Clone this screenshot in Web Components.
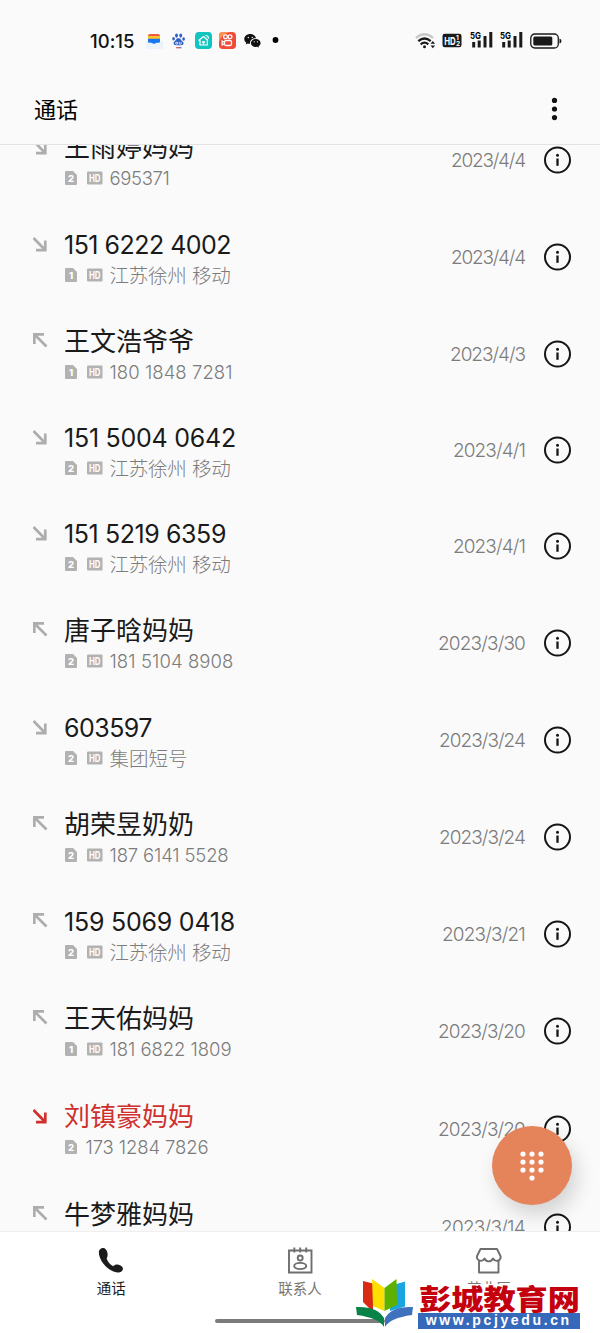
<!DOCTYPE html>
<html lang="zh-CN">
<head>
<meta charset="utf-8">
<title>通话</title>
<style>
    html, body { margin: 0; height: 100%; }
    body {
        font-family: Inter, "Noto Sans CJK SC", sans-serif;
        background: #fafafa;
        color: #1a1a1a;
        overflow: hidden;
    }
</style>
</head>
<body>
<phone-screen>
    <status-bar slot="status" time="10:15"></status-bar>
    <app-header slot="header">通话</app-header>
    <call-row dir="in" sim="2" hd fit="130" subfit="60" date="2023/4/4" datefit="74" style="height:97px">王雨婷妈妈<span slot="sub">695371</span></call-row>
    <call-row dir="in" sim="1" hd number fit="167" subfit="121" date="2023/4/4" datefit="74" style="height:97px">151 6222 4002<span slot="sub">江苏徐州 移动</span></call-row>
    <call-row dir="out" sim="1" hd fit="130" subfit="123" date="2023/4/3" datefit="75" style="height:96px">王文浩爷爷<span slot="sub">180 1848 7281</span></call-row>
    <call-row dir="in" sim="2" hd number fit="172" subfit="121" date="2023/4/1" datefit="72" style="height:96px">151 5004 0642<span slot="sub">江苏徐州 移动</span></call-row>
    <call-row dir="in" sim="2" hd number fit="162" subfit="121" date="2023/4/1" datefit="72" style="height:97px">151 5219 6359<span slot="sub">江苏徐州 移动</span></call-row>
    <call-row dir="out" sim="2" hd fit="130" subfit="124" date="2023/3/30" datefit="87" style="height:97px">唐子晗妈妈<span slot="sub">181 5104 8908</span></call-row>
    <call-row dir="in" sim="2" hd number fit="88" subfit="78" date="2023/3/24" datefit="86" style="height:97px">603597<span slot="sub">集团短号</span></call-row>
    <call-row dir="out" sim="2" hd fit="130" subfit="119" date="2023/3/24" datefit="86" style="height:97px">胡荣昱奶奶<span slot="sub">187 6141 5528</span></call-row>
    <call-row dir="out" sim="2" hd number fit="171" subfit="121" date="2023/3/21" datefit="83" style="height:97px">159 5069 0418<span slot="sub">江苏徐州 移动</span></call-row>
    <call-row dir="out" sim="1" hd fit="130" subfit="122" date="2023/3/20" datefit="87" style="height:98px">王天佑妈妈<span slot="sub">181 6822 1809</span></call-row>
    <call-row dir="in" missed sim="2" fit="130" subfit="123" date="2023/3/20" datefit="87" style="height:98px">刘镇豪妈妈<span slot="sub">173 1284 7826</span></call-row>
    <call-row dir="out" sim="2" hd fit="130" date="2023/3/14" datefit="84" style="height:97px">牛梦雅妈妈<span slot="sub"></span></call-row>
    <dial-button slot="fab"></dial-button>
    <tab-bar slot="tabs">
        <tab-item icon="phone" active>通话</tab-item>
        <tab-item icon="contacts">联系人</tab-item>
        <tab-item icon="store">营业厅</tab-item>
    </tab-bar>
    <site-mark slot="mark" url="www.pcjyedu.cn">彭城教育网</site-mark>
</phone-screen>

<script>
const icons = {
    phone: '<path d="M6.600 1.300C4.200 0 .8 1.900.8 5c0 8.700 9.200 19.600 19.200 20.500 3.700.3 5.900-3.100 4.500-5.200-2.300-3.100-7-3.700-9.300-1-3.200-1.700-5.500-4.800-6.600-7.800 1.900-2.600 1.200-8.100-2-10.200z" fill="#1c1c1c"/>',
    contacts: '<g fill="none" stroke="#6e6e6e" stroke-width="1.900"><path d="M2 3.500h22.500v22H2z"/><path d="M7.300.5v5M13.200.5v5M19.200.5v5"/><circle cx="13.200" cy="11" r="2.500"/><ellipse cx="13.200" cy="19" rx="6" ry="3.100"/></g>',
    store: '<g fill="none" stroke="#6e6e6e" stroke-width="1.900" stroke-linejoin="round"><path d="M4.500 2h16.500l3.700 7.500c0 5-5.500 5.800-7.700 2-1.800 3.800-6.700 3.800-8.500 0-2.200 3.800-7.700 3-7.700-2z"/><path d="M3 13.500v12h19.500v-12"/></g>',
};

// spreads the letters so that a text takes the given width
function fitText(el, width) {
    const text = el.dataset.text || el.textContent;
    const now = el.getBoundingClientRect().width;
    if (!width || !now || text.length < 2) return;
    el.style.letterSpacing = `${(width - now) / text.length}px`;
}

class BaseElement extends HTMLElement {
    constructor() {
        super();
        this.attachShadow({ mode: 'open' });
    }

    connectedCallback() {
        this.shadowRoot.innerHTML = this.render();
        this.ready();
    }

    ready() {}
}

class PhoneScreen extends BaseElement {
    render() {
        return `<style>
            :host { display: flex; flex-direction: column; position: relative; width: 600px; height: 1333px; overflow: hidden; background: #fafafa; }
            .list { flex: 1; min-height: 0; overflow: hidden; }
            .rows { margin-top: -33px; }
            .fab { position: absolute; left: 492px; top: 1126px; z-index: 1; }
            .mark { position: absolute; left: 356px; top: 1277px; z-index: 3; }
            .tabs { position: relative; z-index: 2; }
        </style>
        <slot name="status"></slot>
        <slot name="header"></slot>
        <div class="list"><div class="rows"><slot></slot></div></div>
        <div class="tabs"><slot name="tabs"></slot></div>
        <div class="fab"><slot name="fab"></slot></div>
        <div class="mark"><slot name="mark"></slot></div>`;
    }
}

class StatusBar extends BaseElement {
    render() {
        const bars = `<svg width="24" height="20" viewBox="0 0 24 20">
            <text x="0" y="8.300" font-size="9.500" font-weight="700" textLength="11" lengthAdjust="spacingAndGlyphs">5G</text>
            <path d="M3.700 11v5.500M9.200 9.500v7M15 5v11.500M20.800 1v15.500" stroke="#1a1a1a" stroke-width="3"/></svg>`;
        return `<style>
            :host { display: flex; justify-content: space-between; align-items: center; box-sizing: border-box; height: 81px; padding: 0 38px 0 90px; color: #111; }
            div { display: flex; align-items: center; }
            .time { font-size: 18.500px; font-weight: 450; width: 55.500px; }
            svg { display: block; flex: none; }
            .apps { gap: 7.500px; }
            .sys { gap: 6px; }
        </style>
        <div>
            <div class="time"><span>${this.getAttribute('time')}</span></div>
            <div class="apps">
                <svg width="17" height="17" viewBox="0 0 17 17">
                    <rect y="9" width="17" height="8" fill="#edf3fb"/>
                    <path d="M2 4q0-2 2-2h8q2 0 2 2z" fill="#ef5a3b"/><path d="M2 4h12v3H2z" fill="#fbc02d"/>
                    <path d="M2 6.800h12v3q0 1-1.500 1h-2q-2.500 2-5 0h-2Q2 10.800 2 9.800z" fill="#1977ee"/></svg>
                <svg width="17" height="17" viewBox="-1 -1 19 19" fill="#315fc4">
                    <ellipse cx="6.300" cy="3" rx="1.600" ry="2.300"/><ellipse cx="11" cy="3" rx="1.600" ry="2.300"/>
                    <ellipse cx="3" cy="6.500" rx="1.500" ry="2"/><ellipse cx="14.200" cy="6.800" rx="1.500" ry="2"/>
                    <path d="M8.500 6C5.500 6 6 8.500 4 9.700c-2 1.700-.7 4.300 1.500 4h6.200c2.500.2 3.500-2.300 1.300-4C11 8.500 11.500 6 8.500 6z"/>
                    <path d="M5.500 10.500h2v2h-2zM9.500 10v2.500h2V10" fill="none" stroke="#fff" stroke-width=".8"/>
                    <path d="M5.800 16h3v1.200h-3z" fill="#d33"/><path d="M8.800 16h3v1.200h-3z"/></svg>
                <svg width="17" height="17" viewBox="0 0 17 17"><rect width="17" height="17" rx="3.800" fill="#12c4bf"/>
                    <path d="M3.500 8.500l5-4 4.500 4M5 8v5h7.300V8M8.500 13v-3.500M7 10.500q1.500-1.500 3 0M10.500 3.500q3 0 3 3" fill="none" stroke="#fff" stroke-width="1.200"/></svg>
                <svg width="17" height="17" viewBox="0 0 17 17"><rect width="17" height="17" rx="3.800" fill="#f04a38"/>
                    <path d="M0 10V3.800Q0 0 3.800 0H11Q3 2 0 10z" fill="#fa9350"/>
                    <g fill="none" stroke="#fff" stroke-width="1.300"><circle cx="6.500" cy="4.800" r="1.900"/><circle cx="11" cy="4.800" r="1.900"/><rect x="5.500" y="8.500" width="7" height="5" rx="1.500"/><path d="M5 10l-1.800-1v4L5 12"/></g></svg>
                <svg width="17" height="17" viewBox="0 0 17 17" fill="#111">
                    <path d="M6.300 2C2.800 2 .3 4.200.3 7c0 1.600.8 2.900 2 3.700l-.5 1.700 2-1q1 .3 2.300.3C5.500 8.500 8 6 12 6.200 11.500 3.700 9.200 2 6.300 2z"/>
                    <path d="M11.800 6.900c-2.800 0-4.900 1.800-4.900 4s2.100 4 4.900 4l1.500-.2 1.700 1-.5-1.500c1.300-.8 2.100-2 2.100-3.300 0-2.200-2-4-4.800-4z"/>
                    <g fill="#fafafa"><circle cx="4.300" cy="5.500" r=".7"/><circle cx="8.300" cy="5.500" r=".7"/><circle cx="10.200" cy="9.800" r=".6"/><circle cx="13.400" cy="9.800" r=".6"/></g></svg>
                <svg width="17" height="17" viewBox="0 0 17 17"><circle cx="7.500" cy="8" r="2.900"/></svg>
            </div>
        </div>
        <div class="sys">
            <svg width="21" height="18" viewBox="0 0 21 18" fill="none" stroke-width="2.300">
                <path d="M1 6q8.500-7.500 17 0" stroke="#c8c8c8"/><path d="M3.300 9.200q6.200-5.400 12.400 0M5.700 12.300q3.800-3.300 7.600 0" stroke="#1a1a1a"/>
                <circle cx="9.500" cy="14.800" r="1.500" fill="#1a1a1a"/><path d="M15.500 11.700l2.300-2.800 2.300 2.800zM15.500 13.500l2.300 2.800 2.300-2.800z" fill="#1a1a1a"/></svg>
            <svg width="20" height="15" viewBox="0 0 20 15"><rect x=".5" y=".7" width="19" height="13.600" rx="2.300" fill="#1a1a1a"/>
                <text x="2.200" y="11.600" font-size="11" font-weight="700" fill="#fff" textLength="11.500" lengthAdjust="spacingAndGlyphs">HD</text>
                <text x="14" y="7" font-size="6.500" font-weight="700" fill="#fff">1</text><text x="14" y="13.200" font-size="6.500" font-weight="700" fill="#fff">2</text></svg>
            <span style="margin-left:2px">${bars}</span>
            ${bars}
            <svg width="32" height="16" viewBox="0 0 32 16"><rect x=".8" y="1" width="27.500" height="14" rx="4" fill="none" stroke="#1a1a1a" stroke-width="1.300"/>
                <rect x="3.300" y="3.500" width="19" height="9" rx="1.500" fill="#1a1a1a"/><path d="M29.500 5.500q2 .5 2 2.500t-2 2.500z" fill="#1a1a1a"/></svg>
        </div>`;
    }

    ready() {
        fitText(this.shadowRoot.querySelector('.time span'), 44.5);
    }
}

class AppHeader extends BaseElement {
    render() {
        return `<style>
            :host { display: flex; justify-content: space-between; align-items: center; box-sizing: border-box; height: 64px; padding: 0 42px 7px 34px; border-bottom: 1px solid #e3e3e3; font: 400 22px/32px "Noto Sans CJK SC", sans-serif; color: #000; }
            svg { display: block; }
            div { padding-bottom: 2px; }
        </style>
        <div><slot></slot></div>
        <svg width="7" height="24" viewBox="0 0 7 24" fill="#111"><circle cx="3.500" cy="3.400" r="2.600"/><circle cx="3.500" cy="12" r="2.600"/><circle cx="3.500" cy="20.600" r="2.600"/></svg>`;
    }
}

class CallRow extends BaseElement {
    render() {
        const out = this.getAttribute('dir') === 'out';
        const missed = this.hasAttribute('missed');
        const arrow = out ? 'M1.300 11V1.300H11M1.500 1.500l12 12' : 'M12.300 3.500v9.700H3M.5 1l11.700 12';
        const hd = `<svg width="16" height="14" viewBox="0 0 16 14"><rect y=".5" width="15.500" height="13" rx="1" fill="#b2b2b2"/>
            <text x="2" y="11" font-size="10.500" font-weight="700" fill="#fff" textLength="11.500" lengthAdjust="spacingAndGlyphs">HD</text></svg>`;
        return `<style>
            :host { display: flex; box-sizing: border-box; padding: 0 29px 0 33px; }
            svg { display: block; flex: none; }
            .arrow { margin-top: ${out ? 27 : 28}px; width: 31px; }
            .main { flex: 1; }
            .name { font: 400 26px/32px Inter, "Noto Sans CJK SC", sans-serif; margin-top: 20px; height: 32px; white-space: nowrap; color: ${missed ? '#cf302d' : '#1a1a1a'}; }
            :host([number]) .name { font-size: 25px; font-weight: 370; }
            .sub { display: flex; align-items: center; height: 28px; padding-left: 1px; white-space: nowrap; font: 300 18.500px/28px Inter, "Noto Sans CJK SC", sans-serif; color: #7c7c7c; }
            .sub .sim { margin-right: 9px; }
            .sub .hd { margin-right: 7px; }
            :host([missed]) .sub .sim { margin-right: 8px; }
            .cjk { font-size: 19.500px; padding-top: 1px; }
            .date { margin: 35px 18px 0 0; height: 28px; text-align: right; font: 300 19px/28px Inter, sans-serif; color: #7c7c7c; }
            .info { margin-top: 34px; }
        </style>
        <svg class="arrow" width="31" height="15" viewBox="0 0 31 15"><path d="${arrow}" fill="none" stroke="${missed ? '#cf302d' : '#adadad'}" stroke-width="2.700"/></svg>
        <div class="main">
            <div class="name"><span class="fit"><slot></slot></span></div>
            <div class="sub">
                <svg class="sim" width="12.500" height="14" viewBox="0 0 12.500 14"><path d="M1 0h7l4 4v9q0 1-1 1H1q-1 0-1-1V1q0-1 1-1z" fill="#b2b2b2"/>
                    <text x="6" y="10.800" text-anchor="middle" font-size="9.500" font-weight="800" fill="#fff">${this.getAttribute('sim')}</text></svg>
                ${this.hasAttribute('hd') ? `<span class="hd">${hd}</span>` : ''}
                <span class="subfit"><slot name="sub"></slot></span>
            </div>
        </div>
        <div class="date"><span>${this.getAttribute('date')}</span></div>
        <svg class="info" width="28" height="28" viewBox="0 0 28 28"><circle cx="14.500" cy="14" r="12.500" fill="none" stroke="#151515" stroke-width="2"/>
            <circle cx="14.500" cy="9.300" r="1.500" fill="#151515"/><path d="M14.500 12.500v7.300" stroke="#151515" stroke-width="2.300"/></svg>`;
    }

    ready() {
        const root = this.shadowRoot;
        const name = root.querySelector('.fit');
        const sub = root.querySelector('.subfit');
        const date = root.querySelector('.date span');
        name.dataset.text = this.firstChild.textContent;
        sub.dataset.text = this.querySelector('[slot=sub]').textContent;
        if (/[\u4e00-\u9fff]/.test(sub.dataset.text)) sub.classList.add('cjk');
        fitText(name, Number(this.getAttribute('fit')));
        fitText(sub, Number(this.getAttribute('subfit')));
        fitText(date, Number(this.getAttribute('datefit')));
    }
}

class DialButton extends BaseElement {
    render() {
        let dots = '';
        for (let y = 0; y < 4; y++) {
            for (let x = 0; x < 3; x++) {
                if (y < 3 || x === 1) dots += `<circle cx="${31 + x * 9}" cy="${28 + y * 8}" r="2.600"/>`;
            }
        }
        return `<style>
            :host { display: block; width: 80px; height: 79px; border-radius: 50%; background: #e5835b; box-shadow: 5px 10px 20px rgba(0, 0, 0, .16); }
            svg { display: block; }
        </style>
        <svg width="80" height="79" viewBox="0 0 80 79" fill="#fff">${dots}</svg>`;
    }
}

class TabBar extends BaseElement {
    render() {
        return `<style>
            :host { display: flex; flex-direction: column; align-items: center; box-sizing: border-box; height: 102px; border-top: 1px solid #efefef; background: #fff; }
            .tabs { display: flex; width: 566px; height: 87px; }
            .home { width: 170px; height: 4px; border-radius: 2px; background: #7b7b7b; }
        </style>
        <div class="tabs"><slot></slot></div>
        <div class="home"></div>`;
    }
}

class TabItem extends BaseElement {
    render() {
        return `<style>
            :host { display: flex; flex: 1; flex-direction: column; align-items: center; padding-top: 15px; font: 400 14.500px/22px "Noto Sans CJK SC", sans-serif; color: #777; }
            :host([active]) { color: #1a1a1a; }
            svg { display: block; margin-bottom: 3px; }
        </style>
        <svg width="26" height="27" viewBox="0 0 26 27">${icons[this.getAttribute('icon')]}</svg>
        <slot></slot>`;
    }
}

class SiteMark extends BaseElement {
    render() {
        return `<style>
            :host { display: flex; align-items: flex-start; }
            svg { display: block; width: 57px; margin-right: 4.500px; }
            .text { width: 162.500px; margin-top: 7px; background: #fff; }
            .name { display: block; height: 29px; font: 900 28.500px/27px "Noto Sans CJK SC", sans-serif; color: #c4000f; white-space: nowrap; margin-left: 1px; }
            .name span { display: inline-block; transform: scaleX(1.13); transform-origin: left; }
            .url { height: 16px; background: #3769bb; color: #fff; text-align: center; font: 700 14px/14px "Liberation Sans", sans-serif; }
        </style>
        <svg width="57" height="52" viewBox="0 0 57 52">
            <path d="M49 4.500v25L34 34V9z" fill="#19a6e0"/><path d="M7 4l10 2.500V35L7 25z" fill="#d92a13"/>
            <path d="M16 2l12.500 9v23L17 29z" fill="#ffdf00"/><path d="M40.500 2l-12 9v23L41 28z" fill="#5eb100"/>
            <path d="M0 30q21-1 28 11v9q-5-9-27-12z" fill="#078348"/><path d="M57 30q-21-1-28 11v9q5-9 27-12z" fill="#3e72bd"/>
        </svg>
        <div class="text">
            <div class="name"><span><slot></slot></span></div>
            <div class="url"><span>${this.getAttribute('url')}</span></div>
        </div>`;
    }

    ready() {
        fitText(this.shadowRoot.querySelector('.url span'), 146);
    }
}

customElements.define('phone-screen', PhoneScreen);
customElements.define('status-bar', StatusBar);
customElements.define('app-header', AppHeader);
customElements.define('call-row', CallRow);
customElements.define('dial-button', DialButton);
customElements.define('tab-bar', TabBar);
customElements.define('tab-item', TabItem);
customElements.define('site-mark', SiteMark);
</script>
</body>
</html>
